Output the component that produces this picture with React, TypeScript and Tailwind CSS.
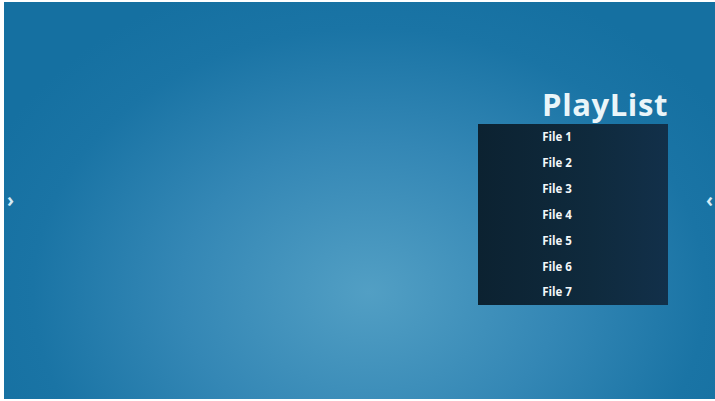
const files = ["File 1", "File 2", "File 3", "File 4", "File 5", "File 6", "File 7"];

export default function App() {
  return (
    <div className="h-[401px] w-[715px] overflow-hidden bg-white pb-[2px] pl-[4px] pt-[2px]">
      <div
        className="relative flex h-full w-full items-center justify-between bg-[radial-gradient(ellipse_420px_330px_at_365px_290px,#529fc4_0%,#3487b5_45%,#1a74a5_80%,#1570a1_100%)] pl-[3px] pr-[2px]"
        style={{ fontFamily: '"Open Sans", "Noto Sans", sans-serif' }}
      >
        <span className="text-[19px] font-bold leading-none text-[#d5ebf6]">›</span>

        <div className="absolute left-[474px] top-[83px] flex w-[190px] flex-col items-end">
          <h1 className="text-[31px] font-bold leading-[38px] tracking-[0.6px] text-[#eaf5f9]">
            PlayList
          </h1>
          <ul className="mt-[1px] flex h-[181px] w-[190px] flex-col bg-[linear-gradient(90deg,#0c2231,#0f2a3d_60%,#12304a)]">
            {files.map((f) => (
              <li
                key={f}
                className="flex h-[26px] items-center justify-center pr-[32px] text-[11.5px] font-bold text-[#f3f7f9]"
              >
                {f}
              </li>
            ))}
          </ul>
        </div>

        <span className="text-[19px] font-bold leading-none text-[#d5ebf6]">‹</span>
      </div>
    </div>
  );
}
